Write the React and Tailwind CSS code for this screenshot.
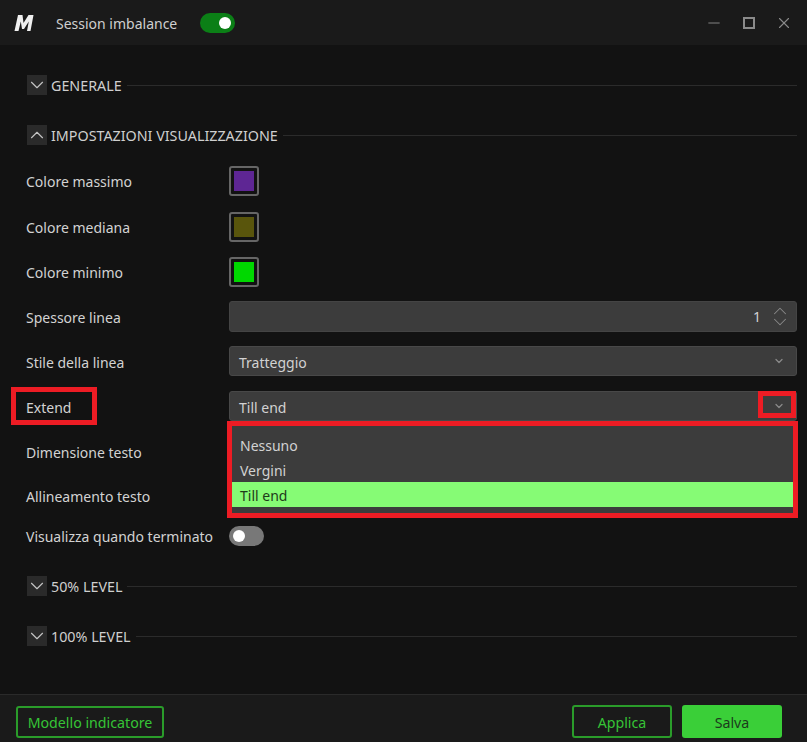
import React from "react";
import { ChevronDown, ChevronUp, Minus, X } from "lucide-react";

function Section({ title, open, className = "" }) {
  const Icon = open ? ChevronUp : ChevronDown;
  return (
    <div className={`flex items-center h-5 ${className}`}>
      <div className="w-5 h-5 bg-[#2a2a2a] flex items-center justify-center shrink-0 overflow-hidden">
        <Icon size={22} strokeWidth={1.25} className="text-[#c4c4c4] shrink-0" />
      </div>
      <span className="ml-1 mr-[5px] pt-[2px] text-[14.3px] text-[#cfcfcf] whitespace-nowrap">{title}</span>
      <div className="flex-1 h-px bg-[#2b2b2b]" />
    </div>
  );
}

function Row({ label, className = "", h = "h-[30px]", labelClass = "", children }) {
  return (
    <div className={`flex items-center ${h} ${className}`}>
      <div className={`w-[203px] shrink-0 text-[14px] text-[#d2d2d2] whitespace-nowrap ${labelClass}`}>{label}</div>
      {children}
    </div>
  );
}

function Swatch({ color }) {
  return (
    <div className="w-[30px] h-[30px] border-2 border-[#666666] rounded-[3px] p-[3px]">
      <div className={`w-full h-full ${color}`} />
    </div>
  );
}

function Select({ value, children }) {
  return (
    <div className="relative flex-1 h-[30px]">
      <div className="h-full bg-[#3c3c3c] border border-[#484848] rounded-[3px] flex items-center justify-between pl-[9px] pr-[11px] text-[14px] text-[#d2d2d2]">
        <span className="pt-[2px]">{value}</span>
        <ChevronDown size={12} strokeWidth={2.5} className="text-[#8a8a8a]" />
      </div>
      {children}
    </div>
  );
}

function Toggle({ on }) {
  return (
    <div className={`w-[35px] h-5 rounded-full flex items-center px-[4px] ${on ? "bg-[#0b7f16] justify-end" : "bg-[#787878] justify-start"}`}>
      <div className="w-3 h-3 rounded-full bg-white" />
    </div>
  );
}

export default function App() {
  return (
    <div className="relative w-[807px] h-[742px] bg-[#121212] flex flex-col overflow-hidden font-['Noto_Sans',sans-serif]">
      <header className="h-[45px] shrink-0 bg-[#1a1a1a] flex items-center pl-[14px] pr-[14px]">
        <svg width="20" height="20" viewBox="0 0 20 20" className="shrink-0">
          <path d="M4 2 H8.5 L9.5 10 L14.5 2 H19.5 L16.5 18 H13 L14.8 8.5 L10 16 H8 L6.8 8.5 L4.5 18 H0.5 Z" fill="#f0f0f0" />
        </svg>
        <span className="ml-[22px] pt-px text-[14px] text-[#cfcfcf] whitespace-nowrap">Session imbalance</span>
        <div className="ml-[23px]"><Toggle on /></div>
        <div className="ml-auto flex items-center text-[#8a8a8a]">
          <Minus size={18} strokeWidth={1.25} />
          <div className="ml-5 w-3 h-3 border-2 border-[#8a8a8a]" />
          <X size={18} strokeWidth={1.5} className="ml-5" />
        </div>
      </header>

      <main className="flex-1 pt-[30px] pl-[27px] pr-[10px]">
        <Section title="GENERALE" />
        <Section title="IMPOSTAZIONI VISUALIZZAZIONE" open className="mt-[30px]" />
        <div className="-ml-px">
          <Row label="Colore massimo" className="mt-[21px]"><Swatch color="bg-[#5e2694]" /></Row>
          <Row label="Colore mediana" className="mt-4"><Swatch color="bg-[#59550c]" /></Row>
          <Row label="Colore minimo" className="mt-[15px]"><Swatch color="bg-[#00d800]" /></Row>
          <Row label="Spessore linea" h="h-[31px]" labelClass="pt-px" className="mt-[14px]">
            <div className="flex-1 h-full bg-[#3c3c3c] border border-[#444444] rounded-[3px] flex items-center justify-end pr-[5px] text-[14px] text-[#d2d2d2]">
              <span>1</span>
              <div className="ml-[8px] flex flex-col text-[#8a8a8a]">
                <ChevronUp size={22} strokeWidth={1.1} className="-mb-[11px]" />
                <ChevronDown size={22} strokeWidth={1.1} />
              </div>
            </div>
          </Row>
          <Row label="Stile della linea" labelClass="pt-[2px]" className="mt-[14px]"><Select value="Tratteggio" /></Row>
          <Row label="Extend" labelClass="pt-[2px]" className="mt-[15px]">
            <Select value="Till end">
              <div className="absolute z-10 left-[3px] right-[4px] top-[35px] h-[87px] bg-[#3c3c3c] pt-[7px] text-[14px] text-[#d2d2d2]">
                <div className="h-[25px] pl-[8px] flex items-center">Nessuno</div>
                <div className="h-[24px] pl-[8px] flex items-center">Vergini</div>
                <div className="h-[25px] pl-[8px] pt-px flex items-center bg-[#86fb75] text-[#1f3a1a]">Till end</div>
              </div>
            </Select>
          </Row>
          <Row label="Dimensione testo" className="mt-4"><Select value="" /></Row>
          <Row label="Allineamento testo" className="mt-[14px]"><Select value="" /></Row>
          <Row label="Visualizza quando terminato" h="h-5" className="mt-[15px]"><Toggle /></Row>
        </div>
        <Section title="50% LEVEL" className="mt-[30px]" />
        <Section title="100% LEVEL" className="mt-[30px]" />
      </main>

      <footer className="h-[48px] shrink-0 bg-[#1a1a1a] border-t border-[#2a2a2a] flex items-start pt-[10px] pl-4 pr-[25px] text-[14.2px]">
        <button className="h-[32px] w-[148px] mt-px pt-[2px] border-2 border-[#2a9c2a] rounded-[3px] text-[#36c436]">Modello indicatore</button>
        <button className="ml-auto h-[33px] w-[100px] pt-[2px] border-2 border-[#2a9c2a] rounded-[3px] text-[#36c436]">Applica</button>
        <button className="ml-[10px] h-[33px] w-[100px] pt-[2px] bg-[#3acf38] rounded-[3px] text-[#1c3a1c]">Salva</button>
      </footer>

      <div className="absolute z-20 left-[11px] top-[387px] w-[86px] h-[38px] border-[5px] border-[#ed1c24]" />
      <div className="absolute z-20 left-[758px] top-[391px] w-[38px] h-[27px] border-[5px] border-[#ed1c24]" />
      <div className="absolute z-20 left-[227px] top-[421px] w-[571px] h-[97px] border-[5px] border-[#ed1c24]" />
    </div>
  );
}
